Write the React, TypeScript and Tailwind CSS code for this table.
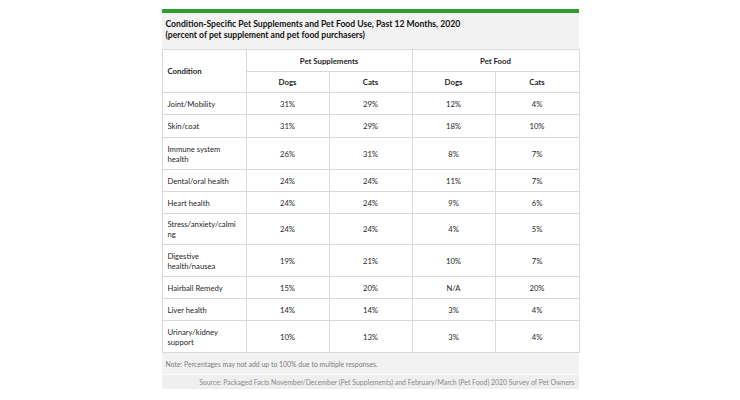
import React from "react";

const rows: { label: React.ReactNode; v: string[]; h: string }[] = [
  { label: "Joint/Mobility", v: ["31%", "29%", "12%", "4%"], h: "h-[22px]" },
  { label: "Skin/coat", v: ["31%", "29%", "18%", "10%"], h: "h-[23px]" },
  { label: <>Immune system<br />health</>, v: ["26%", "31%", "8%", "7%"], h: "h-[32px]" },
  { label: "Dental/oral health", v: ["24%", "24%", "11%", "7%"], h: "h-[22px]" },
  { label: "Heart health", v: ["24%", "24%", "9%", "6%"], h: "h-[22px]" },
  { label: <>Stress/anxiety/calmi<br />ng</>, v: ["24%", "24%", "4%", "5%"], h: "h-[31px]" },
  { label: <>Digestive<br />health/nausea</>, v: ["19%", "21%", "10%", "7%"], h: "h-[32px]" },
  { label: "Hairball Remedy", v: ["15%", "20%", "N/A", "20%"], h: "h-[22px]" },
  { label: "Liver health", v: ["14%", "14%", "3%", "4%"], h: "h-[22px]" },
  { label: <>Urinary/kidney<br />support</>, v: ["10%", "13%", "3%", "4%"], h: "h-[32px]" },
];

export default function App() {
  return (
    <div className="w-[740px] h-[400px] bg-white text-[#1f1f1f] font-['Lato','Noto_Sans',sans-serif]">
      <div className="w-[417px] mx-auto pt-[9px]">
        <div className="h-[4px] bg-[#2e9c2e]" />
        <div className="bg-[#f2f2f2] h-[36px] pl-[4px] pt-[6px] text-[8.6px] leading-[11px] font-bold text-[#111]">
          <div>Condition-Specific Pet Supplements and Pet Food Use, Past 12 Months, 2020</div>
          <div>(percent of pet supplement and pet food purchasers)</div>
        </div>
        <table className="w-[417px] border-collapse table-fixed text-[7.7px] leading-[10px]">
          <colgroup>
            <col className="w-[84px]" />
            <col className="w-[83px]" />
            <col className="w-[83px]" />
            <col className="w-[83px]" />
            <col className="w-[84px]" />
          </colgroup>
          <thead className="text-[7.8px]">
            <tr className="h-[22px]">
              <th rowSpan={2} className="border border-[#d9d9d9] text-left pl-[5px] font-bold align-middle">Condition</th>
              <th colSpan={2} className="border border-[#d9d9d9] font-bold text-center align-middle">Pet Supplements</th>
              <th colSpan={2} className="border border-[#d9d9d9] font-bold text-center align-middle">Pet Food</th>
            </tr>
            <tr className="h-[21px]">
              <th className="border border-[#d9d9d9] font-bold text-center">Dogs</th>
              <th className="border border-[#d9d9d9] font-bold text-center">Cats</th>
              <th className="border border-[#d9d9d9] font-bold text-center">Dogs</th>
              <th className="border border-[#d9d9d9] font-bold text-center">Cats</th>
            </tr>
          </thead>
          <tbody>
            {rows.map((r, i) => (
              <tr key={i} className={r.h}>
                <td className="border border-[#d9d9d9] pl-[5px] text-left align-middle">{r.label}</td>
                {r.v.map((v, j) => (
                  <td key={j} className="border border-[#d9d9d9] text-center align-middle">{v}</td>
                ))}
              </tr>
            ))}
          </tbody>
        </table>
        <div className="bg-[#f2f2f2] h-[21px] pl-[4px] pt-[1px] flex items-center text-[6.9px] text-[#7a7a7a]">
          Note: Percentages may not add up to 100% due to multiple responses.
        </div>
        <div className="bg-[#efefef] mt-[1px] h-[14px] pr-[4px] pt-[1px] flex items-center justify-end text-[6.9px] text-[#8a8a8a]">
          Source: Packaged Facts November/December (Pet Supplements) and February/March (Pet Food) 2020 Survey of Pet Owners
        </div>
      </div>
    </div>
  );
}
